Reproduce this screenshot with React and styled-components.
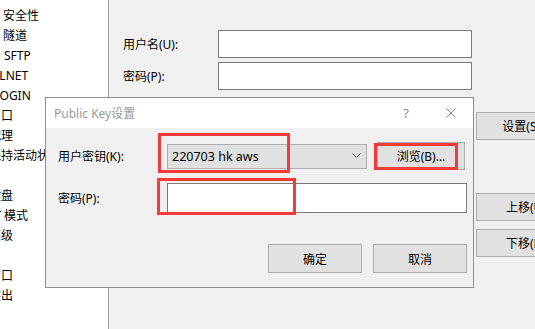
import styled, { createGlobalStyle } from 'styled-components'

const GlobalStyle = createGlobalStyle`
  html, body {
    margin: 0;
    padding: 0;
    background: #f0f0f0;
  }
  body {
    font-family: "Noto Sans", "Noto Sans CJK SC", sans-serif;
    font-size: 12px;
    color: #000;
  }
`

const Page = styled.div`
  position: relative;
  width: 535px;
  height: 329px;
  overflow: hidden;
  display: flex;
  background: #f0f0f0;
`

const Tree = styled.div`
  width: 108px;
  flex-shrink: 0;
  background: #fff;
  border-right: 1px solid #a0a0a0;
  overflow: hidden;
  padding-top: 6px;
  margin-top: -20px;
`

const TreeRow = styled.div`
  height: 20px;
  line-height: 20px;
  white-space: nowrap;
`

const TreeText = styled.span`
  display: inline-block;
  margin-left: ${p => p.$x}px;
`

const Panel = styled.div`
  flex: 1;
  display: flex;
  gap: 4px;
  padding: 30px 0 0 14px;
  overflow: hidden;
`

const Form = styled.div`
  display: flex;
  flex-direction: column;
  gap: 4px;
`

const FormRow = styled.div`
  display: flex;
  align-items: center;
  margin-top: ${p => p.$mt || 0}px;
`

const Label = styled.div`
  width: ${p => p.$w}px;
  flex-shrink: 0;
  white-space: nowrap;
`

const TextBox = styled.div`
  box-sizing: border-box;
  width: ${p => p.$w}px;
  height: ${p => p.$h}px;
  background: #fff;
  border: 1px solid #7a7a7a;
`

const SideButtons = styled.div`
  display: flex;
  flex-direction: column;
  padding-top: 82px;
`

const Button = styled.div`
  box-sizing: border-box;
  flex-shrink: 0;
  width: ${p => p.$w}px;
  height: ${p => p.$h || 28}px;
  margin-top: ${p => p.$mt || 0}px;
  margin-left: ${p => p.$ml || 0}px;
  background: #e1e1e1;
  border: 1px solid #adadad;
  display: flex;
  align-items: center;
  justify-content: center;
  white-space: nowrap;
`

const Dialog = styled.div`
  position: absolute;
  left: 45px;
  top: 97px;
  width: 429px;
  height: 191px;
  box-sizing: border-box;
  border: 1px solid #8f8f8f;
  background: #f0f0f0;
  display: flex;
  flex-direction: column;
`

const TitleBar = styled.div`
  height: 30px;
  background: #fff;
  display: flex;
  align-items: center;
  padding-left: 8px;
  color: #999;
  font-size: 12px;
`

const Title = styled.div`
  flex: 1;
`

const TitleIcon = styled.div`
  width: ${p => p.$w}px;
  display: flex;
  justify-content: center;
  color: #8a8a8a;
  font-size: 13px;
`

const DialogBody = styled.div`
  flex: 1;
  padding: 14px 6px 0 12px;
  display: flex;
  flex-direction: column;
`

const Combo = styled.div`
  box-sizing: border-box;
  width: 200px;
  height: 25px;
  background: #e1e1e1;
  border: 1px solid #adadad;
  display: flex;
  align-items: center;
  justify-content: space-between;
  padding: 0 5px 0 4px;
  font-size: 12.5px;
`

const Footer = styled.div`
  display: flex;
  justify-content: flex-end;
  gap: 11px;
  margin-top: 31px;
`

const Mark = styled.div`
  position: absolute;
  left: ${p => p.$x}px;
  top: ${p => p.$y}px;
  width: ${p => p.$w}px;
  height: ${p => p.$h}px;
  box-sizing: border-box;
  border: 3px solid #f53a3a;
  pointer-events: none;
`

// tree is scrolled sideways, so parents sit left of the visible edge
const treeItems = [
  ['SSH', -13],
  ['安全性', 3],
  ['隧道', 3],
  ['SFTP', 4],
  ['TELNET', -14],
  ['RLOGIN', -14],
  ['串口', -11],
  ['代理', -11],
  ['保持活动状态', -11],
  ['终端', -29],
  ['键盘', -11],
  ['VT 模式', -13],
  ['高级', -11],
  ['外观', -29],
  ['窗口', -11],
  ['突出', -11],
  ['高级', -29],
]

const Chevron = () => (
  <svg width="9" height="6" viewBox="0 0 9 6">
    <polyline points="0.5,0.5 4.5,4.5 8.5,0.5" fill="none" stroke="#555" strokeWidth="1" />
  </svg>
)

const CloseIcon = () => (
  <svg width="10" height="10" viewBox="0 0 10 10">
    <path d="M0.5 0.5 L9.5 9.5 M9.5 0.5 L0.5 9.5" stroke="#888" strokeWidth="1" />
  </svg>
)

export default function App() {
  return (
    <>
      <GlobalStyle />
      <Page>
        <Tree>
          {treeItems.map(([text, x], i) => (
            <TreeRow key={i}>
              <TreeText $x={x}>{text}</TreeText>
            </TreeRow>
          ))}
        </Tree>
        <Panel>
          <Form>
            <FormRow>
              <Label $w={95}>用户名(U):</Label>
              <TextBox $w={254} $h={28} />
            </FormRow>
            <FormRow>
              <Label $w={95}>密码(P):</Label>
              <TextBox $w={254} $h={28} />
            </FormRow>
          </Form>
          <SideButtons>
            <Button $w={100}>设置(S)...</Button>
            <Button $w={100} $mt={53}>上移(U)</Button>
            <Button $w={100} $mt={8}>下移(D)</Button>
          </SideButtons>
        </Panel>

        <Dialog>
          <TitleBar>
            <Title>Public Key设置</Title>
            <TitleIcon $w={46}>?</TitleIcon>
            <TitleIcon $w={44}><CloseIcon /></TitleIcon>
          </TitleBar>
          <DialogBody>
            <FormRow>
              <Label $w={109}>用户密钥(K):</Label>
              <Combo>
                <span>220703 hk aws</span>
                <Chevron />
              </Combo>
              <Button $w={88} $ml={10}>浏览(B)...</Button>
            </FormRow>
            <FormRow $mt={13}>
              <Label $w={109}>密码(P):</Label>
              <TextBox $w={300} $h={30} />
            </FormRow>
            <Footer>
              <Button $w={94} $h={29}>确定</Button>
              <Button $w={94} $h={29}>取消</Button>
            </Footer>
          </DialogBody>
        </Dialog>

        <Mark $x={158} $y={133} $w={132} $h={40} />
        <Mark $x={374} $y={143} $w={84} $h={27} />
        <Mark $x={157} $y={178} $w={139} $h={37} />
      </Page>
    </>
  )
}
